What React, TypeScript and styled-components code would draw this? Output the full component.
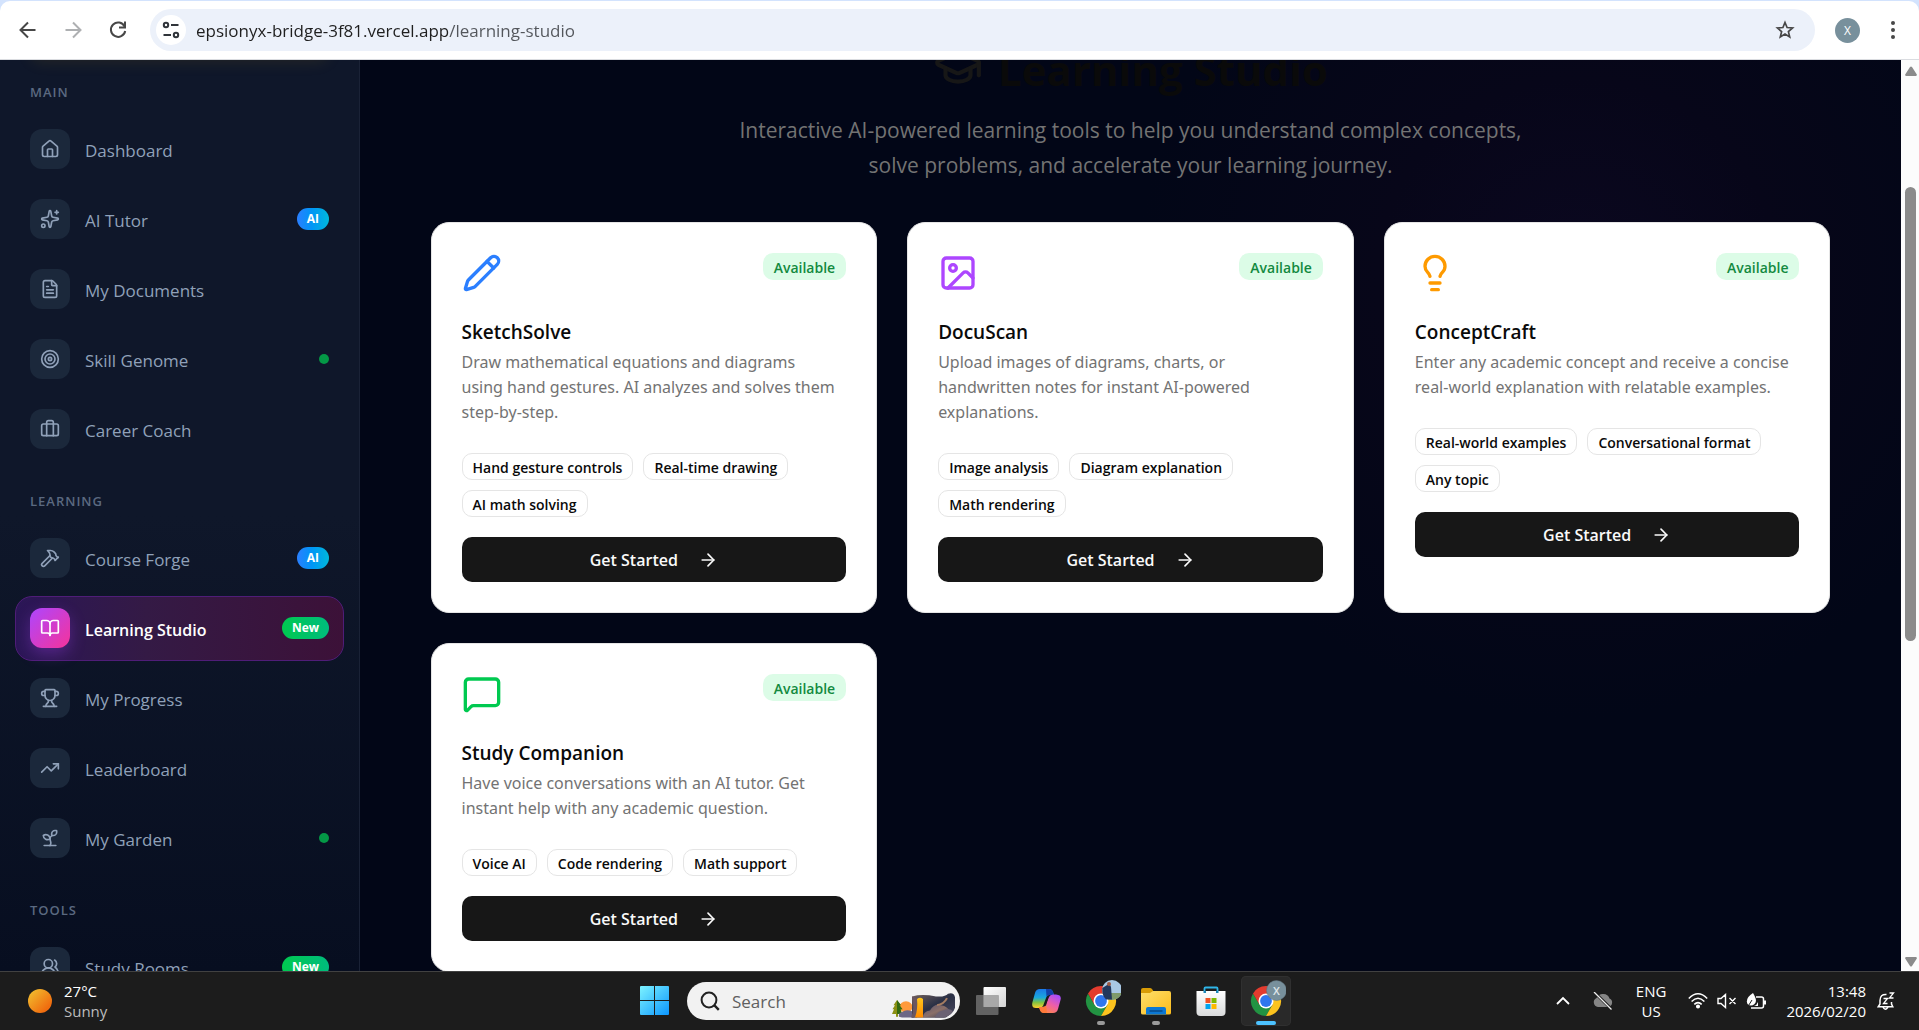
import React from "react";
import styled, { createGlobalStyle, css } from "styled-components";
import {
  ArrowRight, BookOpen, Briefcase, FileText, GraduationCap, Hammer, House, Image as ImageIcon,
  Lightbulb, MessageSquare, Pencil, Sparkles, Sprout, Target, TrendingUp, Trophy, UsersRound,
} from "lucide-react";
import type { LucideIcon } from "lucide-react";

const GlobalStyle = createGlobalStyle`
  *, *::before, *::after { box-sizing: border-box; }
  body { margin: 0; overflow: hidden; background: #020617; }
  body, button, input { font-family: "Segoe UI", "Open Sans", "Noto Sans", sans-serif; }
  h1, h2, h3, p, ul { margin: 0; padding: 0; }
  ul { list-style: none; }
  button { border: 0; padding: 0; background: none; cursor: pointer; }
  svg { display: block; flex: none; }
`;

const Screen = styled.div`
  display: flex;
  flex-direction: column;
  height: 100vh;
`;

/* ---------- Browser toolbar ---------- */

const TabStrip = styled.div`
  flex: none;
  background: #d3e3fd;
  padding-top: 1px;
`;

const Toolbar = styled.header`
  display: flex;
  align-items: center;
  height: 59px;
  padding: 0 14px 0 16px;
  background: #fff;
  border-bottom: 1px solid #dadce0;
  border-radius: 10px 10px 0 0;
`;

const ToolbarNav = styled.nav`
  display: flex;
  gap: 21px;
  margin-right: 20px;
`;

const ToolButton = styled.button<{ $faded?: boolean }>`
  display: grid;
  place-items: center;
  width: 24px;
  height: 24px;
  color: ${(p) => (p.$faded ? "#aeb0b2" : "#474747")};
`;

const AddressBar = styled.form`
  display: flex;
  align-items: center;
  flex: 1;
  height: 42px;
  padding: 0 18px 0 6px;
  border-radius: 21px;
  background: #ecf1fa;
`;

const SiteInfo = styled.button`
  display: grid;
  place-items: center;
  width: 30px;
  height: 30px;
  border-radius: 50%;
  background: #fff;
`;

const UrlInput = styled.input`
  flex: 1;
  height: 30px;
  margin-left: 10px;
  padding: 0;
  border: 0;
  outline: 0;
  font-size: 17px;
  color: #1f1f1f;
  background: linear-gradient(90deg, #1f1f1f 252px, #53565b 252px);
  background-clip: text;
  -webkit-text-fill-color: transparent;
`;

const Profile = styled.button`
  width: 25px;
  height: 25px;
  margin: 0 21px 0 20px;
  border-radius: 50%;
  background: #78909c;
  color: #fff;
  font-size: 12px;
`;

/* ---------- Page frame ---------- */

const Body = styled.div`
  display: flex;
  flex: 1;
  min-height: 0;
  background: #020617;
`;

const Sidebar = styled.aside`
  flex: none;
  width: 360px;
  overflow: hidden;
  padding: 0 15px;
  border-right: 1px solid #1a2236;
  background: linear-gradient(180deg, #0f172a 0%, #0f172a 50%, #070e20 100%);
`;

const PromoEdge = styled.div`
  height: 20px;
  margin: -22px 15px 25px;
  border-radius: 16px;
  box-shadow: 0 4px 16px rgba(240, 177, 0, 0.1);
`;

const NavHeading = styled.h2`
  margin: 0 15px 16px;
  font-size: 13px;
  line-height: 18px;
  font-weight: 600;
  letter-spacing: 1px;
  color: #5b6980;
`;

const NavList = styled.ul`
  display: grid;
  gap: 5px;
  margin-bottom: 30px;
`;

const NavLink = styled.a<{ $active?: boolean }>`
  display: flex;
  align-items: center;
  gap: 15px;
  height: 65px;
  padding: 0 14px 1px;
  border: 1px solid transparent;
  border-radius: 17px;
  font-size: 17px;
  font-weight: 500;
  color: #90a1b9;
  text-decoration: none;
  ${(p) =>
    p.$active &&
    css`
      color: #fff;
      font-size: 16px;
      font-weight: 600;
      border-color: #4f1d78;
      background: linear-gradient(90deg, #2b1657, #341a45 40%, #3c1138);
    `}
`;

const NavIcon = styled.span<{ $active?: boolean }>`
  display: grid;
  place-items: center;
  width: 40px;
  height: 40px;
  border-radius: 12px;
  background: #1b283b;
  ${(p) =>
    p.$active &&
    css`
      background: linear-gradient(135deg, #ad46ff, #f6339a);
      box-shadow: 0 6px 16px rgba(173, 70, 255, 0.3);
    `}
`;

const NavText = styled.span`
  flex: 1;
  padding-top: 4px;
  line-height: 24px;
`;

const NavBadge = styled.span<{ $kind: "AI" | "New" }>`
  padding: 0 10px;
  border-radius: 11px;
  font-size: 12px;
  line-height: 22px;
  font-weight: 700;
  color: #fff;
  background: ${(p) =>
    p.$kind === "AI"
      ? "linear-gradient(90deg, #2b7fff, #0095f6 45%, #00b8db)"
      : "linear-gradient(90deg, #00c950, #00bc7d)"};
`;

const NavDot = styled.span`
  width: 10px;
  height: 10px;
  border-radius: 50%;
  background: #049846;
`;

const Main = styled.main`
  flex: 1;
  min-width: 0;
  overflow: hidden;
  background: radial-gradient(circle at 79% 24%, #0b0820 0, #070619 200px, #020617 440px) #020617;
`;

const Container = styled.div`
  max-width: 1400px;
  margin: -18px auto 0;
`;

const Hero = styled.div`
  display: flex;
  flex-direction: column;
  align-items: center;
  gap: 21px;
  margin-bottom: 39px;
`;

const HeroTitle = styled.h1`
  display: flex;
  align-items: center;
  gap: 15px;
  font-size: 42px;
  line-height: 44px;
  font-weight: 700;
  color: #0a0a0a;
  svg { color: #171717; }
  span { padding-top: 6px; }
`;

const HeroText = styled.p`
  max-width: 820px;
  font-size: 21px;
  line-height: 35px;
  text-align: center;
  color: #737373;
`;

const CardGrid = styled.div`
  display: grid;
  grid-template-columns: repeat(3, minmax(0, 1fr));
  gap: 30px;
`;

const Card = styled.article`
  padding: 30px;
  border: 1px solid #e5e5e5;
  border-radius: 18px;
  background: #fff;
`;

const CardTop = styled.div<{ $tone: string }>`
  display: flex;
  align-items: flex-start;
  justify-content: space-between;
  margin-bottom: 26px;
  color: ${(p) => p.$tone};
`;

const Status = styled.span`
  padding: 2px 11px 0;
  border-radius: 10px;
  background: #dcfce7;
  color: #138a3f;
  font-size: 14px;
  line-height: 25px;
  font-weight: 600;
`;

const CardTitle = styled.h3`
  margin-bottom: 5px;
  font-size: 19px;
  line-height: 26px;
  font-weight: 600;
  color: #0a0a0a;
`;

const CardText = styled.p`
  margin-bottom: 28px;
  padding-right: 8px;
  font-family: "Segoe UI", "Noto Sans", sans-serif;
  font-size: 16px;
  line-height: 25px;
  color: #737373;
`;

const Chips = styled.ul`
  display: flex;
  flex-wrap: wrap;
  gap: 10px;
  margin-bottom: 20px;
`;

const Chip = styled.li`
  padding: 2px 10px 0;
  border: 1px solid #e5e5e5;
  border-radius: 10px;
  font-size: 14px;
  line-height: 23px;
  font-weight: 600;
  color: #0a0a0a;
`;

const StartButton = styled.button`
  display: flex;
  align-items: center;
  justify-content: center;
  gap: 20px;
  width: 100%;
  height: 45px;
  padding-top: 1px;
  border-radius: 10px;
  background: #171717;
  color: #fafafa;
  font-size: 16px;
  font-weight: 600;
`;

const ScrollRail = styled.div`
  display: flex;
  flex-direction: column;
  flex: none;
  align-items: center;
  width: 18px;
  padding: 6px 0 4px 1px;
  background: #fcfcfc;
`;

const RailSpace = styled.div<{ $share: number }>`
  flex: ${(p) => p.$share};
`;

const Thumb = styled.div`
  flex: 454;
  width: 11px;
  border-radius: 6px;
  background: #8b8b8b;
`;

/* ---------- Taskbar ---------- */

const Taskbar = styled.footer`
  display: grid;
  grid-template-columns: 1fr auto 1fr;
  align-items: center;
  flex: none;
  height: 59px;
  padding: 0 24px 0 26px;
  border-top: 1px solid #414141;
  background: #1c1c1c;
  color: #fff;
`;

const Weather = styled.button`
  display: flex;
  align-items: center;
  justify-self: start;
  gap: 12px;
  padding-left: 2px;
  color: #fff;
  text-align: left;
`;

const TwoLines = styled.span<{ $align?: string }>`
  display: grid;
  font-size: 15px;
  line-height: 20px;
  text-align: ${(p) => p.$align || "left"};
`;

const Muted = styled.span`
  color: #bdbdbd;
`;

const Dock = styled.div`
  display: flex;
  align-items: center;
  gap: 5px;
`;

const DockButton = styled.button<{ $active?: boolean }>`
  position: relative;
  display: grid;
  place-items: center;
  width: 50px;
  height: 50px;
  border-radius: 5px;
  ${(p) =>
    p.$active &&
    css`
      background: #292929;
      box-shadow: inset 0 0 0 1px #303030;
    `}
`;

const Running = styled.span<{ $active?: boolean }>`
  position: absolute;
  bottom: 1px;
  left: 50%;
  width: ${(p) => (p.$active ? 20 : 8)}px;
  height: 4px;
  border-radius: 2px;
  transform: translateX(-50%);
  background: ${(p) => (p.$active ? "#4cc2ff" : "#9a9a9a")};
`;

const SearchBox = styled.label`
  display: flex;
  align-items: center;
  gap: 12px;
  width: 273px;
  height: 38px;
  margin: 0 1px 0 2px;
  padding: 0 3px 0 13px;
  border-radius: 19px;
  background: #f2f2f2;
`;

const SearchInput = styled.input`
  flex: 1;
  min-width: 0;
  padding: 0;
  border: 0;
  outline: 0;
  background: transparent;
  font-size: 17px;
  color: #1b1b1b;
  &::placeholder { color: #5f5f5f; opacity: 1; }
`;

const Tray = styled.div`
  display: flex;
  align-items: center;
  justify-self: end;
`;

const TrayButton = styled.button<{ $gap?: number }>`
  display: flex;
  align-items: center;
  gap: 9px;
  margin-left: ${(p) => p.$gap || 0}px;
  color: #fff;
`;

/* ---------- Drawings ---------- */

const Back = ({ flip }: { flip?: boolean }) => (
  <svg width="20" height="20" viewBox="0 0 20 20" fill="none" stroke="currentColor" strokeWidth="2">
    <path d={flip ? "M2.500 10H17M10 2.500 17.500 10 10 17.500" : "M17.500 10H3M10 2.500 2.500 10 10 17.500"} />
  </svg>
);

const Reload = () => (
  <svg width="20" height="20" viewBox="0 0 20 20" fill="none" stroke="currentColor" strokeWidth="2">
    <path d="M16.600 6.500A7.200 7.200 0 1 0 17.200 11" />
    <path d="M17 1.500V7.500H11" />
  </svg>
);

const Tune = () => (
  <svg width="18" height="18" viewBox="0 0 18 18" fill="none" stroke="#30343a" strokeWidth="2">
    <circle cx="4" cy="4" r="2.200" /><path d="M9 4H16.500M1.500 14H9" /><circle cx="14" cy="14" r="2.200" />
  </svg>
);

const Star = () => (
  <svg width="20" height="20" viewBox="0 0 20 20" fill="none" stroke="#474747" strokeWidth="1.700">
    <path d="M10 2.500 12.100 7.500 17.600 8 13.400 11.600 14.700 17 10 14.100 5.300 17 6.600 11.600 2.400 8 7.900 7.500Z" />
  </svg>
);

const Dots = () => (
  <svg width="6" height="20" viewBox="0 0 6 20" fill="#474747">
    <circle cx="3" cy="3" r="2" /><circle cx="3" cy="10" r="2" /><circle cx="3" cy="17" r="2" />
  </svg>
);

const RailArrow = ({ down }: { down?: boolean }) => (
  <svg width="12" height="10" viewBox="0 0 12 10" fill="#8b8b8b">
    <path d={down ? "M1 0H11Q12.500 .5 11.500 2L7 9Q6 10 5 9L.5 2Q-.5.5 1 0Z" : "M1 10H11Q12.500 9.500 11.500 8L7 1Q6 0 5 1L.5 8Q-.5 9.500 1 10Z"} />
  </svg>
);

const Sun = () => (
  <svg width="24" height="24" viewBox="0 0 24 24">
    <defs>
      <linearGradient id="sun" x1="0" y1="0" x2="1" y2="1">
        <stop offset="0" stopColor="#f2c531" /><stop offset="0.800" stopColor="#f06c0f" />
      </linearGradient>
    </defs>
    <circle cx="12" cy="12" r="12" fill="url(#sun)" />
  </svg>
);

const StartLogo = () => (
  <svg width="30" height="30" viewBox="0 0 30 30">
    <defs>
      <linearGradient id="win" gradientUnits="userSpaceOnUse" x1="0" y1="0" x2="30" y2="30">
        <stop offset="0" stopColor="#7df3ff" /><stop offset="1" stopColor="#0893ff" />
      </linearGradient>
    </defs>
    <path fill="url(#win)" d="M1 0H14V14H0V1Q0 0 1 0ZM15 0H28Q29 0 29 1V14H15ZM0 15H14V29H1Q0 29 0 28ZM15 15H29V28Q29 29 28 29H15Z" />
  </svg>
);

const Magnifier = () => (
  <svg width="20" height="20" viewBox="0 0 20 20" fill="none" stroke="#222" strokeWidth="2">
    <circle cx="9" cy="9" r="7.400" /><path d="M14.200 14.200 18.800 18.800" strokeWidth="2.400" />
  </svg>
);

const Scenery = () => (
  <svg width="65" height="38" viewBox="0 -9 65 38">
    <defs>
      <linearGradient id="rock" x1="0" y1="0" x2="1" y2="1">
        <stop offset="0" stopColor="#77645f" /><stop offset="0.500" stopColor="#2a3045" /><stop offset="1" stopColor="#4a4a60" />
      </linearGradient>
      <linearGradient id="boulder" x1="0" y1="0" x2="1" y2="1">
        <stop offset="0" stopColor="#5b546d" /><stop offset="0.500" stopColor="#8a6f68" /><stop offset="1" stopColor="#343a50" />
      </linearGradient>
      <linearGradient id="fall" x1="0" y1="0" x2="0" y2="1">
        <stop offset="0" stopColor="#ffc61c" /><stop offset="1" stopColor="#ff8a00" />
      </linearGradient>
    </defs>
    <g transform="translate(0 1) scale(1 .88)">
      <circle cx="14" cy="17" r="6.500" fill="#ff9a3c" />
      <path d="M5 9 9 15H7.500L10.500 19.500H8.500L10 25H6V28H4V25H0L2 19.500H.5L3 15H1.500Z" fill="#8a8f12" />
      <path d="M5 9 9 15H7.500L10.500 19.500H8.500L10 25H5Z" fill="#33690f" />
      <path d="M7 28Q6 24 10 23Q14 19 20 22L22 29H10Z" fill="#6d6786" />
      <path d="M20 5Q30 2 44 5Q53 6 56 2Q62 0 63 6V18Q61 26 52 29H20Z" fill="url(#rock)" />
      <path d="M20 5 25 7V29H19Q23 18 20 5Z" fill="#6a5661" />
      <path d="M25 8Q28 5 31 8V29H23Q26 20 25 8Z" fill="url(#fall)" />
      <path d="M31 29Q31 22 38 21Q42 13 49 15Q56 16 59 24L54 29Z" fill="url(#boulder)" />
      <path d="M45 15Q52 14 55 7" stroke="#a57d62" strokeWidth="2" fill="none" />
      <path d="M43 29Q45 22 51 21Q58 18 61 22Q57 28 52 29Z" fill="#6b6273" />
    </g>
  </svg>
);

const TaskView = () => (
  <svg width="30" height="28" viewBox="0 0 30 28">
    <defs>
      <linearGradient id="pane" x1="0" y1="0" x2="1" y2="1">
        <stop offset="0" stopColor="#fff" /><stop offset="1" stopColor="#d4d4d4" />
      </linearGradient>
    </defs>
    <rect x="7.500" y="0" width="22.500" height="20" rx="1" fill="url(#pane)" />
    <rect x="0" y="8" width="22.500" height="20" rx="1" fill="#6a6a6a" fillOpacity="0.900" />
    <rect x="7.500" y="8" width="15" height="12" fill="#a8a8a8" />
  </svg>
);

const Copilot = () => (
  <svg width="29" height="26" viewBox="0 0 29 26">
    <defs>
      <linearGradient id="cpa" x1="0" y1="0" x2="0" y2="1">
        <stop offset="0" stopColor="#1b78e8" /><stop offset="0.450" stopColor="#1aa8dc" /><stop offset="0.700" stopColor="#7cc243" /><stop offset="1" stopColor="#ffd02b" />
      </linearGradient>
      <linearGradient id="cpb" x1="0.800" y1="0" x2="0.200" y2="1">
        <stop offset="0" stopColor="#a64bff" /><stop offset="0.500" stopColor="#ef5fa6" /><stop offset="1" stopColor="#ff8b3d" />
      </linearGradient>
    </defs>
    <path d="M8 1H17Q20 1 21 4L22 7H17Q15 7 14 10L11 18Q10 20 7 20H4Q-1 20 .5 14L3 5Q4 1 8 1Z" fill="url(#cpa)" />
    <path d="M14 1H17Q20 1 21 4L22 7H18Q15 7 14.500 9Z" fill="#123fa8" />
    <path d="M21 25H12Q9 25 8 22L7 19H11Q13 19 14 16L17 9Q18 6.500 21 6.500H24Q30 7 28.500 12L26 21Q25 25 21 25Z" fill="url(#cpb)" />
    <path d="M15 25H12Q9 25 8 22L7 19H11Q13 19 14 17Z" fill="#ff7a3a" />
    <path d="M15 9.500 17 7.500 14 17.500 12 18.500Z" fill="#1c1c1c" />
  </svg>
);

const ChromeLogo = ({ badge }: { badge: "photo" | "letter" }) => (
  <svg width="40" height="42" viewBox="0 0 40 42">
    <g transform="translate(20 21)">
      <path d="M-13-7.500-6.500 3.750 6.500 3.750 0 15A15 15 0 0 1-13-7.500Z" fill="#229342" />
      <path d="M0-7.500H13A15 15 0 0 1 0 15L6.500 3.750Z" fill="#fcc31e" />
      <path d="M0-7.500H13A15 15 0 0 0-13-7.500L-6.500 3.750Z" fill="#e33b2e" />
      <circle r="7.500" fill="#fff" /><circle r="5.900" fill="#2f76ee" />
    </g>
    {badge === "letter" ? (
      <g>
        <circle cx="30.500" cy="10.500" r="10" fill="#78909c" stroke="#5d717b" strokeWidth="0.500" />
        <text x="30.500" y="14.500" fontSize="11" fontWeight="600" textAnchor="middle" fill="#dfe6ea">X</text>
      </g>
    ) : (
      <g>
        <circle cx="31" cy="10" r="10" fill="#a9c8e4" />
        <path d="M21.500 13H40.500A10 10 0 0 1 21.500 13Z" fill="#7f9a6a" />
        <path d="M27 4.500Q29.500 4 30 7L31 19.500H25Q21 16 21.300 8Z" fill="#22375c" />
        <circle cx="28" cy="4" r="2" fill="#9d5a45" />
      </g>
    )}
  </svg>
);

const Folder = () => (
  <svg width="30" height="27" viewBox="0 0 30 27">
    <defs>
      <linearGradient id="fold" x1="0" y1="0" x2="1" y2="1">
        <stop offset="0" stopColor="#ffdf6b" /><stop offset="1" stopColor="#fbbc1c" />
      </linearGradient>
    </defs>
    <path d="M0 2Q0 0 2 0H9Q10 0 11 1L13 4H24V10H0Z" fill="#d99c06" />
    <path d="M0 5H9L12 3H28Q30 3 30 5V25Q30 26.500 28 26.500H2Q0 26.500 0 25Z" fill="url(#fold)" />
    <path d="M5 26.500V21Q5 19 7 19H23Q25 19 25 21V26.500Z" fill="#0c78d4" />
    <path d="M8.500 23H21.500" stroke="#07437e" strokeWidth="1.300" />
  </svg>
);

const Store = () => (
  <svg width="30" height="30" viewBox="0 0 30 30">
    <defs>
      <linearGradient id="bag" x1="0" y1="0" x2="0" y2="1">
        <stop offset="0" stopColor="#fff" /><stop offset="1" stopColor="#d9dadb" />
      </linearGradient>
    </defs>
    <path d="M8.500 8V2.500Q8.500 1.500 9.500 1.500H20.500Q21.500 1.500 21.500 2.500V8" fill="none" stroke="#2fb5e8" strokeWidth="1.800" />
    <path d="M.5 5H29.500V26Q29.500 30 25.500 30H4.500Q.5 30 .5 26Z" fill="url(#bag)" />
    <path d="M7.500 5H10V7H7.500ZM20 5H22.500V7H20Z" fill="#1d87b8" />
    <path d="M9.500 12H14.500V17H9.500Z" fill="#f25022" /><path d="M15.500 12H20.500V17H15.500Z" fill="#7fba00" />
    <path d="M9.500 18H14.500V23H9.500Z" fill="#00a4ef" /><path d="M15.500 18H20.500V23H15.500Z" fill="#ffb900" />
  </svg>
);

const Chevron = () => (
  <svg width="14" height="10" viewBox="0 0 14 10" fill="none" stroke="#fff" strokeWidth="1.800"><path d="M1 8 7 2 13 8" /></svg>
);

const CloudOff = () => (
  <svg width="20" height="18" viewBox="0 0 20 18">
    <path d="M5 15A5 4.800 0 0 1 3.500 6Q6 1.500 10.500 2Q15 2 16.500 6.500A4.500 4.500 0 0 1 15.500 15Z" fill="#858585" />
    <path d="M1 0 19 17.500" stroke="#1c1c1c" strokeWidth="3" /><path d="M1 0 18.500 17.500" stroke="#eee" strokeWidth="1.300" />
  </svg>
);

const Wifi = () => (
  <svg width="20" height="16" viewBox="0 0 20 16" fill="none" stroke="#fff" strokeWidth="1.500">
    <path d="M.8 5.500Q10-3.800 19.200 5.500M3.600 8.600Q10 2 16.400 8.600M6.300 11.400Q10 7.800 13.700 11.400" /><circle cx="10" cy="13.500" r="1.300" fill="#fff" />
  </svg>
);

const SpeakerOff = () => (
  <svg width="20" height="16" viewBox="0 0 20 16" fill="none" stroke="#fff" strokeWidth="1.400">
    <path d="M1 5.500H4L8.500 1.500V14.500L4 10.500H1ZM12.500 5 18.500 11M18.500 5 12.500 11" />
  </svg>
);

const Battery = () => (
  <svg width="21" height="17" viewBox="0 0 21 17">
    <path d="M10 4H15.500Q17.500 4 17.500 6V13Q17.500 15 15.500 15H5" fill="none" stroke="#fff" strokeWidth="1.500" />
    <path d="M19 7.500V11.500" stroke="#fff" strokeWidth="2" /><path d="M12 6V9Q11 12 8 13H12Z" fill="#fff" />
    <path d="M7 0Q12 8 8.500 11Q5 14 1.500 11Q-1 5 7 0Z" fill="#fff" /><path d="M1 15 6 7" stroke="#1c1c1c" strokeWidth="1" />
  </svg>
);

const Bell = () => (
  <svg width="18" height="19" viewBox="0 0 18 19" fill="none" stroke="#fff" strokeWidth="1.500">
    <path d="M9.500 2.500Q3 2 3 8.500V12L1.200 14.800H15.800L14.500 12V10" /><path d="M6 15Q8 19.500 11 15" />
    <path d="M6.500 6.500H10.500L6.500 11.500H10.500M12.500 1H16.500L12.500 6H16.500" strokeWidth="1.300" />
  </svg>
);

/* ---------- Data ---------- */

interface NavItem { label: string; icon: LucideIcon; badge?: "AI" | "New"; dot?: boolean; active?: boolean }

const sections: { title: string; items: NavItem[] }[] = [
  { title: "MAIN", items: [
    { label: "Dashboard", icon: House },
    { label: "AI Tutor", icon: Sparkles, badge: "AI" },
    { label: "My Documents", icon: FileText },
    { label: "Skill Genome", icon: Target, dot: true },
    { label: "Career Coach", icon: Briefcase },
  ] },
  { title: "LEARNING", items: [
    { label: "Course Forge", icon: Hammer, badge: "AI" },
    { label: "Learning Studio", icon: BookOpen, badge: "New", active: true },
    { label: "My Progress", icon: Trophy },
    { label: "Leaderboard", icon: TrendingUp },
    { label: "My Garden", icon: Sprout, dot: true },
  ] },
  { title: "TOOLS", items: [{ label: "Study Rooms", icon: UsersRound, badge: "New" }] },
];

const tools: { name: string; text: string; icon: LucideIcon; tone: string; chips: string[] }[] = [
  { name: "SketchSolve", icon: Pencil, tone: "#2b7fff",
    text: "Draw mathematical equations and diagrams using hand gestures. AI analyzes and solves them step-by-step.",
    chips: ["Hand gesture controls", "Real-time drawing", "AI math solving"] },
  { name: "DocuScan", icon: ImageIcon, tone: "#ad46ff",
    text: "Upload images of diagrams, charts, or handwritten notes for instant AI-powered explanations.",
    chips: ["Image analysis", "Diagram explanation", "Math rendering"] },
  { name: "ConceptCraft", icon: Lightbulb, tone: "#fe9a00",
    text: "Enter any academic concept and receive a concise real-world explanation with relatable examples.",
    chips: ["Real-world examples", "Conversational format", "Any topic"] },
  { name: "Study Companion", icon: MessageSquare, tone: "#00c950",
    text: "Have voice conversations with an AI tutor. Get instant help with any academic question.",
    chips: ["Voice AI", "Code rendering", "Math support"] },
];

export default function App() {
  return (
    <Screen>
      <GlobalStyle />
      <TabStrip>
        <Toolbar>
          <ToolbarNav aria-label="Browser">
            <ToolButton aria-label="Back"><Back /></ToolButton>
            <ToolButton aria-label="Forward" $faded><Back flip /></ToolButton>
            <ToolButton aria-label="Reload"><Reload /></ToolButton>
          </ToolbarNav>
          <AddressBar onSubmit={(e) => e.preventDefault()}>
            <SiteInfo type="button" aria-label="Site information"><Tune /></SiteInfo>
            <UrlInput aria-label="Address" defaultValue="epsionyx-bridge-3f81.vercel.app/learning-studio" />
            <ToolButton type="button" aria-label="Bookmark"><Star /></ToolButton>
          </AddressBar>
          <Profile>X</Profile>
          <ToolButton aria-label="Menu"><Dots /></ToolButton>
        </Toolbar>
      </TabStrip>

      <Body>
        <Sidebar>
          <PromoEdge />
          {sections.map((section) => (
            <section key={section.title}>
              <NavHeading>{section.title}</NavHeading>
              <NavList>
                {section.items.map(({ label, icon: Icon, badge, dot, active }) => (
                  <li key={label}>
                    <NavLink href="#" $active={active}>
                      <NavIcon $active={active}><Icon size={20} /></NavIcon>
                      <NavText>{label}</NavText>
                      {badge && <NavBadge $kind={badge}>{badge}</NavBadge>}
                      {dot && <NavDot />}
                    </NavLink>
                  </li>
                ))}
              </NavList>
            </section>
          ))}
        </Sidebar>

        <Main>
          <Container>
            <Hero>
              <HeroTitle><GraduationCap size={50} /><span>Learning Studio</span></HeroTitle>
              <HeroText>
                Interactive AI-powered learning tools to help you understand complex concepts, solve problems, and
                accelerate your learning journey.
              </HeroText>
            </Hero>
            <CardGrid>
              {tools.map(({ name, text, icon: Icon, tone, chips }) => (
                <Card key={name}>
                  <CardTop $tone={tone}><Icon size={40} /><Status>Available</Status></CardTop>
                  <CardTitle>{name}</CardTitle>
                  <CardText>{text}</CardText>
                  <Chips>{chips.map((c) => <Chip key={c}>{c}</Chip>)}</Chips>
                  <StartButton>Get Started<ArrowRight size={20} /></StartButton>
                </Card>
              ))}
            </CardGrid>
          </Container>
        </Main>

        <ScrollRail aria-hidden>
          <RailArrow />
          <RailSpace $share={111} />
          <Thumb />
          <RailSpace $share={316} />
          <RailArrow down />
        </ScrollRail>
      </Body>

      <Taskbar>
        <Weather>
          <Sun />
          <TwoLines><span>27°C</span><Muted>Sunny</Muted></TwoLines>
        </Weather>
        <Dock>
          <DockButton aria-label="Start"><StartLogo /></DockButton>
          <SearchBox>
            <Magnifier />
            <SearchInput type="text" placeholder="Search" aria-label="Search" />
            <Scenery />
          </SearchBox>
          <DockButton aria-label="Task view"><TaskView /></DockButton>
          <DockButton aria-label="Copilot"><Copilot /></DockButton>
          <DockButton aria-label="Chrome"><ChromeLogo badge="photo" /><Running /></DockButton>
          <DockButton aria-label="File Explorer"><Folder /><Running /></DockButton>
          <DockButton aria-label="Store"><Store /></DockButton>
          <DockButton aria-label="Chrome, profile X" $active><ChromeLogo badge="letter" /><Running $active /></DockButton>
        </Dock>
        <Tray>
          <TrayButton aria-label="Hidden icons"><Chevron /></TrayButton>
          <TrayButton aria-label="OneDrive" $gap={23}><CloudOff /></TrayButton>
          <TrayButton $gap={23}><TwoLines $align="center"><span>ENG</span><span>US</span></TwoLines></TrayButton>
          <TrayButton aria-label="Network, sound, battery" $gap={22}><Wifi /><SpeakerOff /><Battery /></TrayButton>
          <TrayButton $gap={19}><TwoLines $align="right"><span>13:48</span><span>2026/02/20</span></TwoLines></TrayButton>
          <TrayButton aria-label="Notifications" $gap={11}><Bell /></TrayButton>
        </Tray>
      </Taskbar>
    </Screen>
  );
}
